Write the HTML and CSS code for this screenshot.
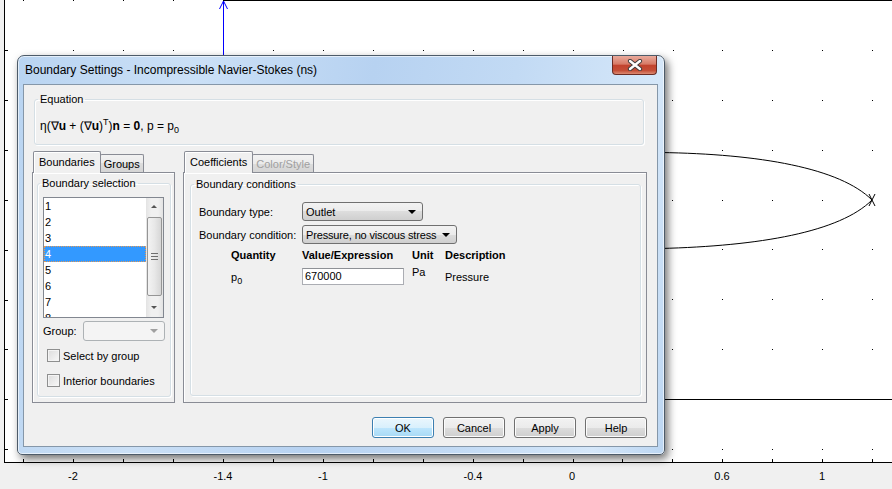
FILE: index.html
```html
<!DOCTYPE html>
<html lang="en">
  <head>
    <meta charset="UTF-8" />
    <title>Boundary Settings</title>
    <link rel="stylesheet" href="styles.css">
  </head>
  <body>
    <div class="screen">
      <svg class="plot" width="892" height="489" viewBox="0 0 892 489">
        <rect x="4" y="0" width="888" height="463" fill="#fff"/>
        <g stroke="#000" stroke-width="1" fill="none">
          <line x1="4.5" y1="0" x2="4.5" y2="463"/>
          <line x1="4" y1="462.5" x2="892" y2="462.5"/>
          <line x1="223" y1="0.5" x2="892" y2="0.5"/>
          <line x1="300" y1="399.5" x2="892" y2="399.5"/>
          <path d="M4 50.5h4M4 100.5h4M4 150.5h4M4 200.5h4M4 250.5h4M4 300.5h4M4 349.5h4M4 399.5h4M4 449.5h4"/>
          <path d="M23.5 459v4M73.5 459v4M123.5 459v4M173.5 459v4M223.5 459v4M273.5 459v4M323.5 459v4M373.5 459v4M423.5 459v4M473.5 459v4M523.5 459v4M573.5 459v4M622.5 459v4M672.5 459v4M722.5 459v4M772.5 459v4M822.5 459v4M872.5 459v4"/>
          <path d="M500 152.5 L660 152.5 C760 154 840 168 872 200 C840 232 760 246 660 248.5 L500 248.5"/>
          <path d="M869 194 L875 206 M875 194 L869 206"/>
        </g>
        <g fill="#000">
          <rect x="23" y="0" width="1" height="1"/><rect x="73" y="0" width="1" height="1"/><rect x="123" y="0" width="1" height="1"/><rect x="173" y="0" width="1" height="1"/>
          <rect x="73" y="50" width="1" height="1"/><rect x="123" y="50" width="1" height="1"/><rect x="173" y="50" width="1" height="1"/><rect x="273" y="50" width="1" height="1"/><rect x="323" y="50" width="1" height="1"/><rect x="373" y="50" width="1" height="1"/><rect x="423" y="50" width="1" height="1"/><rect x="473" y="50" width="1" height="1"/><rect x="523" y="50" width="1" height="1"/><rect x="573" y="50" width="1" height="1"/><rect x="623" y="50" width="1" height="1"/><rect x="673" y="50" width="1" height="1"/><rect x="722" y="50" width="1" height="1"/><rect x="772" y="50" width="1" height="1"/><rect x="822" y="50" width="1" height="1"/><rect x="872" y="50" width="1" height="1"/>
          <rect x="672" y="100" width="1" height="1"/><rect x="722" y="100" width="1" height="1"/><rect x="772" y="100" width="1" height="1"/><rect x="822" y="100" width="1" height="1"/><rect x="872" y="100" width="1" height="1"/>
          <rect x="722" y="150" width="1" height="1"/><rect x="772" y="150" width="1" height="1"/><rect x="822" y="150" width="1" height="1"/><rect x="872" y="150" width="1" height="1"/>
          <rect x="672" y="200" width="1" height="1"/><rect x="722" y="200" width="1" height="1"/><rect x="772" y="200" width="1" height="1"/><rect x="822" y="200" width="1" height="1"/>
          <rect x="722" y="249" width="1" height="1"/><rect x="772" y="249" width="1" height="1"/><rect x="822" y="249" width="1" height="1"/><rect x="872" y="249" width="1" height="1"/>
          <rect x="672" y="299" width="1" height="1"/><rect x="722" y="299" width="1" height="1"/><rect x="772" y="299" width="1" height="1"/><rect x="822" y="299" width="1" height="1"/><rect x="872" y="299" width="1" height="1"/>
          <rect x="672" y="349" width="1" height="1"/><rect x="722" y="349" width="1" height="1"/><rect x="772" y="349" width="1" height="1"/><rect x="822" y="349" width="1" height="1"/><rect x="872" y="349" width="1" height="1"/>
          <rect x="672" y="449" width="1" height="1"/><rect x="722" y="449" width="1" height="1"/><rect x="772" y="449" width="1" height="1"/><rect x="822" y="449" width="1" height="1"/><rect x="872" y="449" width="1" height="1"/>
        </g>
        <g stroke="#0000ff" stroke-width="1" fill="none">
          <line x1="223.5" y1="1" x2="223.5" y2="160"/>
          <path d="M219.5 9 L223.5 1 L227.5 9"/>
        </g>
        <g class="ticklabels" text-anchor="middle">
          <text x="73" y="480">-2</text>
          <text x="223" y="480">-1.4</text>
          <text x="323" y="480">-1</text>
          <text x="473" y="480">-0.4</text>
          <text x="572" y="480">0</text>
          <text x="722" y="480">0.6</text>
          <text x="822" y="480">1</text>
        </g>
      </svg>

      <div class="dialog">
        <div class="titlebar">
          <span class="title">Boundary Settings - Incompressible Navier-Stokes (ns)</span>
          <span class="close">
            <svg width="16" height="12" viewBox="0 0 16 12">
              <path d="M3 2 L13 10 M13 2 L3 10" stroke="#3a3a3a" stroke-width="4.2" stroke-linecap="round"/>
              <path d="M3 2 L13 10 M13 2 L3 10" stroke="#fff" stroke-width="2.4" stroke-linecap="round"/>
            </svg>
          </span>
        </div>

        <div class="client">
          <fieldset class="group eq">
            <legend>Equation</legend>
            <div class="eq-text">η(∇<b>u</b> + (∇<b>u</b>)<sup>T</sup>)<b>n</b> = <b>0</b>, p = p<sub>0</sub></div>
          </fieldset>

          <div class="panes">
            <div class="tabctl left">
              <div class="tabs">
                <span class="tab active">Boundaries</span>
                <span class="tab">Groups</span>
              </div>
              <div class="tabpanel">
                <fieldset class="group sel">
                  <legend>Boundary selection</legend>
                  <div class="listbox">
                    <ul class="items">
                      <li>1</li>
                      <li>2</li>
                      <li>3</li>
                      <li class="selected">4</li>
                      <li>5</li>
                      <li>6</li>
                      <li>7</li>
                      <li>8</li>
                    </ul>
                    <div class="vscroll">
                      <span class="sarrow up"></span>
                      <span class="thumb"><span class="grip"></span></span>
                      <span class="sarrow down"></span>
                    </div>
                  </div>
                  <div class="grouprow">
                    <span>Group:</span>
                    <span class="combo disabled"></span>
                  </div>
                  <label class="check first"><span class="box"></span>Select by group</label>
                  <label class="check"><span class="box"></span>Interior boundaries</label>
                </fieldset>
              </div>
            </div>

            <div class="tabctl right">
              <div class="tabs">
                <span class="tab active">Coefficients</span>
                <span class="tab off">Color/Style</span>
              </div>
              <div class="tabpanel">
                <fieldset class="group bc">
                  <legend>Boundary conditions</legend>
                  <div class="form">
                    <span>Boundary type:</span>
                    <span class="combo w1">Outlet</span>
                    <span>Boundary condition:</span>
                    <span class="combo w2">Pressure, no viscous stress</span>
                  </div>
                  <div class="qtable">
                    <span class="th">Quantity</span>
                    <span class="th">Value/Expression</span>
                    <span class="th">Unit</span>
                    <span class="th">Description</span>
                    <span class="qname">p<sub>0</sub></span>
                    <span class="field">670000</span>
                    <span class="unit">Pa</span>
                    <span class="desc">Pressure</span>
                  </div>
                </fieldset>
              </div>
            </div>
          </div>

          <div class="buttons">
            <span class="btn default">OK</span>
            <span class="btn">Cancel</span>
            <span class="btn">Apply</span>
            <span class="btn">Help</span>
          </div>
        </div>
      </div>
    </div>
  </body>
</html>
```

FILE: styles.css
```css
*{
  box-sizing: border-box;
}
body {
  margin: 0;
  font-family: "Liberation Sans", Arial, sans-serif;
  font-size: 11px;
  color: #000;
}
.screen {
  position: relative;
  width: 892px;
  height: 489px;
  background: #f0f0f0;
  overflow: hidden;
}
.plot {
  position: absolute;
  left: 0;
  top: 0;
}
.ticklabels text {
  font-family: "Liberation Sans", Arial, sans-serif;
  font-size: 11px;
  fill: #000;
}

/* window */
.dialog {
  position: absolute;
  left: 17px;
  top: 55px;
  width: 648px;
  height: 400px;
  display: flex;
  flex-direction: column;
  padding: 0 6px 7px 5px;
  border: 1px solid #4d5b69;
  border-radius: 7px 7px 5px 5px;
  background: linear-gradient(100deg, #b9d4f1 0%, #cbe0f6 25%, #b7d2f1 50%, #c2daf4 70%, #d5e7f9 90%, #bcd6f2 100%);
  box-shadow: inset 0 0 0 1px rgba(255,255,255,.6), 3px 4px 9px rgba(0,0,0,.55);
}
.titlebar {
  height: 28px;
  display: flex;
  justify-content: space-between;
  align-items: flex-start;
}
.title {
  padding: 7px 0 0 2px;
  font-size: 12px;
  color: #000;
}
.close {
  width: 45px;
  height: 19px;
  margin-right: 1px;
  display: flex;
  justify-content: center;
  align-items: center;
  border: 1px solid #6a2c24;
  border-top: none;
  border-radius: 0 0 4px 4px;
  background: linear-gradient(#e9aa9c, #d77a66 45%, #c2432e 52%, #c44d36 80%, #dc8a72);
}
.client {
  flex: 1;
  display: flex;
  flex-direction: column;
  background: #f0f0f0;
  border: 1px solid #8597a9;
}

/* group boxes */
fieldset.group {
  margin: 0;
  padding: 0;
  min-width: 0;
  border: 1px solid #d5dfe5;
  border-radius: 3px;
  box-shadow: inset 1px 1px #fff, 1px 1px #fff;
}
fieldset.group legend {
  padding: 0 2px;
  line-height: 13px;
}
fieldset.eq {
  margin: 8px 0 0 10px;
  width: 610px;
  height: 52px;
  padding: 12px 5px 0;
}
fieldset.eq legend {
  margin-left: -2px;
}
.eq-text {
  font-size: 12px;
  line-height: 16px;
}
.eq-text sup {
  font-size: 9px;
  vertical-align: 5px;
  line-height: 0;
}
.eq-text sub, .qname sub {
  font-size: 9px;
  vertical-align: -3px;
  line-height: 0;
}

/* tab controls */
.panes {
  display: flex;
  gap: 8px;
  margin: 6px 0 0 8px;
}
.tabctl {
  display: flex;
  flex-direction: column;
  height: 252px;
}
.tabctl.left {
  width: 143px;
}
.tabctl.right {
  width: 464px;
}
.tabs {
  display: flex;
  align-items: flex-end;
  height: 21px;
  padding-left: 1px;
  position: relative;
  z-index: 1;
}
.tab {
  height: 18px;
  padding: 0 3px;
  margin-left: -1px;
  line-height: 18px;
  white-space: nowrap;
  border: 1px solid #898c95;
  border-bottom: none;
  border-radius: 2px 2px 0 0;
  background: linear-gradient(#f2f2f2, #ebebeb 50%, #dddddd 50%, #d5d5d5);
}
.tab.active {
  height: 22px;
  margin-bottom: -1px;
  margin-left: 0;
  padding: 0 5px;
  line-height: 20px;
  background: #f0f0f0;
  box-shadow: inset 1px 1px #fff;
}
.tab.off {
  color: #a0a0a0;
}
.tabpanel {
  flex: 1;
  border: 1px solid #898c95;
  box-shadow: inset 1px 1px #fff;
}

/* boundary selection */
fieldset.sel {
  margin: 4px 3px 0 4px;
  height: 220px;
  padding: 7px 0 0 5px;
}
fieldset.sel legend {
  margin-left: -3px;
}
.listbox {
  width: 121px;
  height: 121px;
  display: flex;
  border: 1px solid #828790;
  background: #fff;
  overflow: hidden;
}
.items {
  flex: 1;
  list-style: none;
  margin: 0;
  padding: 0;
}
.items li {
  height: 16px;
  line-height: 16px;
  padding-left: 1px;
}
.items li.selected {
  background: #3399ff;
  color: #fff;
  outline: 1px dotted #e59a55;
  outline-offset: -1px;
}
.vscroll {
  width: 17px;
  display: flex;
  flex-direction: column;
  align-items: center;
  background: linear-gradient(90deg, #e3e3e3, #f0f0f0 30%, #f0f0f0 70%, #e3e3e3);
}
.sarrow {
  height: 18px;
  width: 17px;
  position: relative;
}
.sarrow::after {
  content: "";
  position: absolute;
  left: 5px;
  top: 7px;
  border-left: 3px solid transparent;
  border-right: 3px solid transparent;
}
.sarrow.up::after {
  border-bottom: 3px solid #555;
}
.sarrow.down::after {
  border-top: 3px solid #555;
}
.thumb {
  flex: 1;
  width: 15px;
  margin: 1px 0 3px;
  display: flex;
  justify-content: center;
  align-items: center;
  border: 1px solid #959595;
  border-radius: 2px;
  background: linear-gradient(90deg, #f3f3f3, #e8e8e8 50%, #d6d6d6);
}
.grip {
  width: 7px;
  height: 7px;
  border-top: 1px solid #6e6e6e;
  border-bottom: 1px solid #6e6e6e;
  background: linear-gradient(#fff0 2px, #6e6e6e 2px, #6e6e6e 3px, #fff0 3px);
}
.grouprow {
  display: flex;
  align-items: center;
  width: 122px;
  height: 21px;
  margin-top: 2px;
}
.grouprow .combo {
  margin-left: auto;
  width: 82px;
  height: 20px;
}
.check {
  display: flex;
  align-items: center;
  gap: 3px;
  margin: 12px 0 0 4px;
  height: 13px;
}
.check.first {
  margin-top: 8px;
}
.box {
  width: 13px;
  height: 13px;
  border: 1px solid #8e8f8f;
  background: linear-gradient(135deg, #dcdcdc, #f8f8f8);
  box-shadow: inset 0 0 0 1px #f4f4f4;
}

/* combos, fields */
.combo {
  position: relative;
  height: 19px;
  display: flex;
  align-items: center;
  padding: 0 14px 0 3px;
  white-space: nowrap;
  border: 1px solid #707070;
  border-radius: 3px;
  background: linear-gradient(#f2f2f2, #ebebeb 50%, #dddddd 50%, #cfcfcf);
}
.combo::after {
  content: "";
  position: absolute;
  right: 6px;
  top: 7px;
  border-left: 4px solid transparent;
  border-right: 4px solid transparent;
  border-top: 4px solid #000;
}
.combo.disabled {
  border-color: #adb2b5;
  background: #f4f4f4;
}
.combo.disabled::after {
  border-top-color: #a0a0a0;
}
.combo.w1 {
  width: 121px;
}
.combo.w2 {
  width: 155px;
  letter-spacing: -0.15px;
}

/* boundary conditions */
fieldset.bc {
  margin: 5px 5px 0 6px;
  height: 218px;
  padding: 11px 0 0 8px;
}
fieldset.bc legend {
  margin-left: -5px;
}
.form {
  display: grid;
  grid-template-columns: 103px auto;
  row-gap: 4px;
  align-items: center;
  justify-items: start;
}
.qtable {
  display: grid;
  grid-template-columns: 71px 110px 33px auto;
  grid-template-rows: 16px 20px;
  row-gap: 3px;
  margin: 3px 0 0 32px;
  align-items: center;
}
.th {
  font-weight: bold;
}
.qname {
  padding-top: 2px;
}
.field {
  width: 102px;
  height: 17px;
  padding-left: 2px;
  line-height: 15px;
  border: 1px solid #abadb3;
  border-top-color: #8e9196;
  background: #fff;
}
.unit {
  align-self: start;
}
.desc {
  padding-top: 2px;
}

/* buttons */
.buttons {
  display: flex;
  justify-content: flex-end;
  gap: 9px;
  margin: 14px 10px 0 0;
}
.btn {
  width: 62px;
  height: 21px;
  display: flex;
  justify-content: center;
  align-items: center;
  border: 1px solid #707070;
  border-radius: 3px;
  background: linear-gradient(#f2f2f2, #ebebeb 50%, #dddddd 50%, #cfcfcf);
  box-shadow: inset 0 0 0 1px #fcfcfc;
}
.btn.default {
  border-color: #3c7fb1;
  background: linear-gradient(#eaf6fd, #d9f0fc 50%, #bee6fd 50%, #a7d9f5);
  box-shadow: inset 0 0 0 1px #fff;
}
```
